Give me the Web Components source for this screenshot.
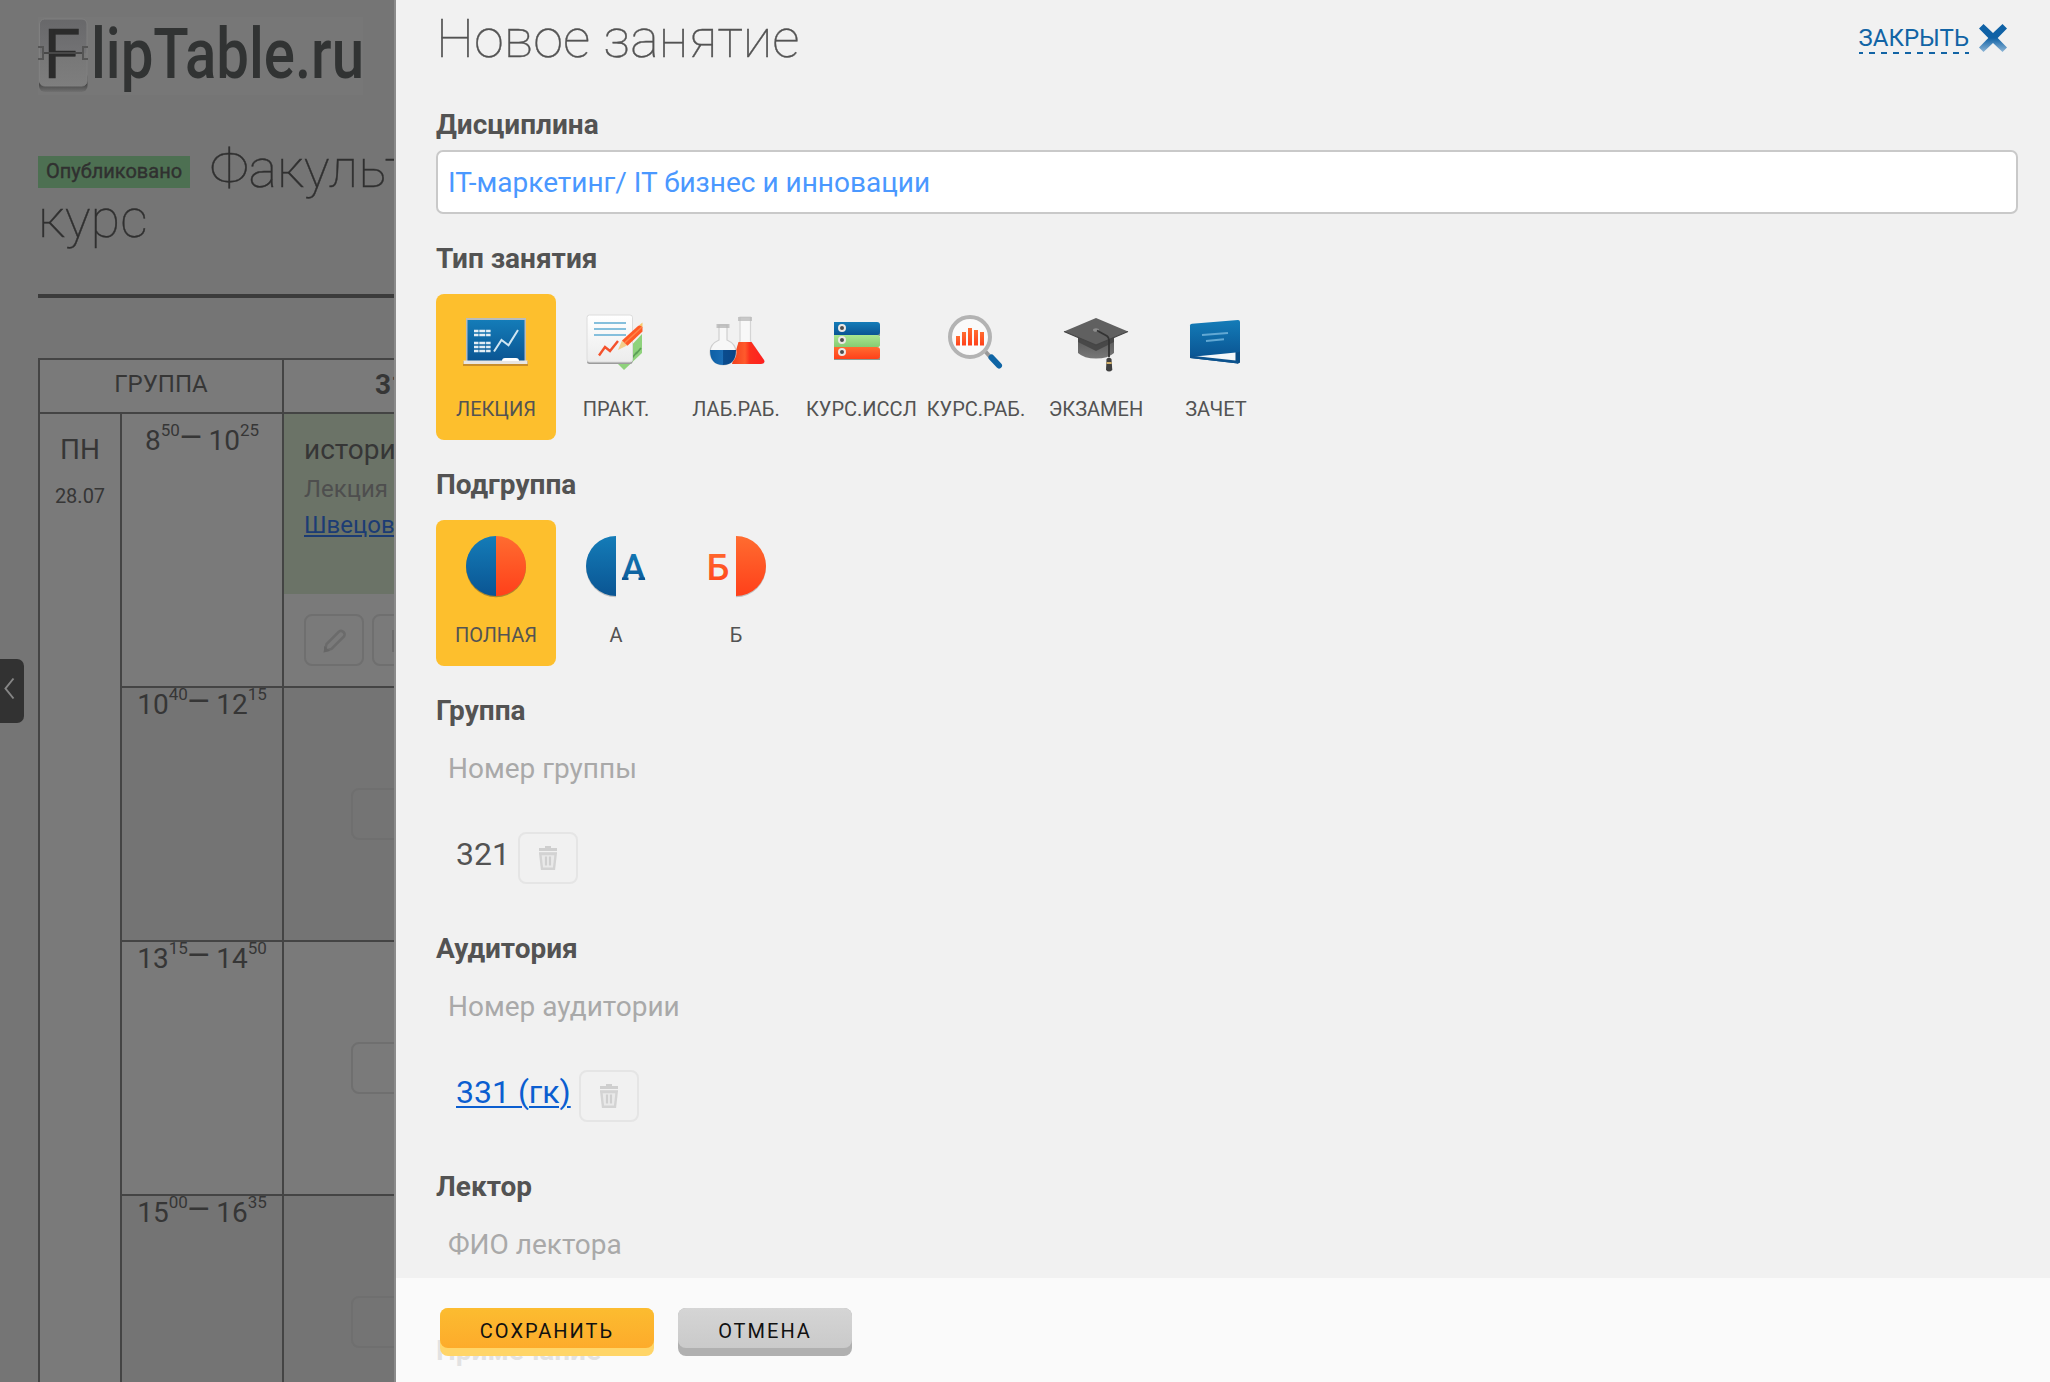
<!DOCTYPE html>
<html lang="ru">
<head>
<meta charset="utf-8">
<title>FlipTable.ru</title>
<style>
html,body{margin:0;height:1382px;overflow:hidden;background:#757575}
body{font-family:Roboto,"Liberation Sans",sans-serif;color:#535353}
</style>
</head>
<body>
<lesson-app></lesson-app>
<script>
const define=(name,html)=>customElements.define(name,class extends HTMLElement{
  connectedCallback(){
    if(this.shadowRoot)return;
    const root=this.attachShadow({mode:"open"});
    root.innerHTML=typeof html==="function"?html(this):html;
  }
});

const GRAD=`<defs>
<linearGradient id="b" x1="0" y1="0" x2="0" y2="1"><stop offset="0" stop-color="#147cb8"/><stop offset="1" stop-color="#0a5593"/></linearGradient>
<linearGradient id="r" x1="0" y1="0" x2="0" y2="1"><stop offset="0" stop-color="#ff6c30"/><stop offset="1" stop-color="#ff401a"/></linearGradient>
<linearGradient id="g" x1="0" y1="0" x2="0" y2="1"><stop offset="0" stop-color="#a9e690"/><stop offset="1" stop-color="#86cc72"/></linearGradient>
<linearGradient id="w" x1="0" y1="0" x2="0" y2="1"><stop offset="0" stop-color="#fff"/><stop offset="1" stop-color="#ececec"/></linearGradient>
<linearGradient id="k" x1="0" y1="0" x2="0" y2="1"><stop offset="0" stop-color="#575757"/><stop offset="1" stop-color="#777"/></linearGradient>
<linearGradient id="lq" x1="0" y1="0" x2="1" y2="0"><stop offset="0" stop-color="#f0401c"/><stop offset=".4" stop-color="#ff5a2c"/><stop offset=".55" stop-color="#fb2f1c"/><stop offset="1" stop-color="#ff1f1f"/></linearGradient>
<linearGradient id="sq" x1="0" y1="0" x2="1" y2="0"><stop offset="0" stop-color="#0d5fa5"/><stop offset=".5" stop-color="#1b6db4"/><stop offset=".52" stop-color="#0a4c8e"/><stop offset="1" stop-color="#0a4585"/></linearGradient>
</defs>`;
const ICONS={
lecture:`<rect x="27" y="67" width="65" height="5" fill="#c98e2a"/><rect x="30" y="24" width="60" height="43" fill="#b9bcbc"/><rect x="31.5" y="26" width="57" height="41" fill="url(#b)"/><rect x="27.500" y="66.500" width="64" height="3.500" fill="#e9e6e2"/><g stroke="#e4eef5" stroke-width="2.300" stroke-dasharray="4.500 .8 6 .8"><path d="M38 37h17M38 41h17M38 49h17M38 53h17M38 57h17"/></g><path d="M58 57.500 65.500 46l7 5.200L82 36" fill="none" stroke="#cfe6f2" stroke-width="2"/><path d="M66 67q0-3 3-3h11q3 0 3 3z" fill="#fff"/>`,
practice:`<path d="M86 40v19L68 76 60 68z" fill="#8fd27c"/><path d="m80 60 5-6M76 64l5-6M71 69l4-5" stroke="#5d9f57" stroke-width="1.800"/><rect x="31" y="22" width="45.500" height="48" rx="2.500" fill="#9c9c9c"/><rect x="31" y="21" width="45.500" height="47" rx="2.500" fill="url(#w)" stroke="#dcdcdc"/><path d="M38 29h32M38 35h32M38 41h32" stroke="#85bfdc" stroke-width="2"/><path d="M43 61.500 49 53l5 4 8-10" fill="none" stroke="#f4522c" stroke-width="2.400"/><path d="M62 56 66 46.500 71 51.500z" fill="#f2cf8b"/><path d="M66 46.500 82 32q3-2 4.500 1v4.500L71.500 51.800z" fill="#ff5a26"/><path d="M68.500 49 86 33" stroke="#ff8548" stroke-width="1.500"/><path d="m83.500 31 3-2.500V33z" fill="#f7c96a"/>`,
lab:`<path d="M64 23v24L57 68q0 1.500 2 1.500h27q2.500 0 2-2.500L74.500 47V23z" fill="#f8f8f8" stroke="#d4d4d4" stroke-width="1.200"/><path d="M62.500 48H75.500L88 66q1.500 3.500-3 4H56z" fill="url(#lq)"/><path d="M62 24h14M62 26h14" stroke="#b8b8b8" stroke-width="1.400"/><path d="M43 31v15q-9 4-9 12a13 13 0 0 0 26 0q0-8-9-12V31z" fill="#f7f7f7" stroke="#cfcfcf" stroke-width="1.200"/><path d="M34 56h26q0 15-13 15T34 56z" fill="url(#sq)"/><path d="M40.500 31h13M40.500 33h13" stroke="#b4b4b4" stroke-width="1.400"/>`,
binders:`<path d="M38 39h46v3H38zM38 63h46v3H38z" fill="#8b9b93"/><path d="M38 28h43q3 0 3 3v7q0 3-3 3H38z" fill="url(#b)"/><path d="M38 41h43q3 0 3 3v7q0 2-3 2H38z" fill="url(#g)"/><path d="M38 53h43q3 0 3 3v6q0 3-3 3H38z" fill="url(#r)"/><g fill="#4d4d4d" stroke="#ece8e4" stroke-width="2"><circle cx="46" cy="34" r="3"/><circle cx="46" cy="46" r="3"/><circle cx="46" cy="58" r="3"/></g>`,
search:`<path d="m69 57 7 8" stroke="#999" stroke-width="4"/><path d="m75.500 63.500 7.500 8" stroke="#0f65a5" stroke-width="6" stroke-linecap="round"/><circle cx="54" cy="43" r="20" fill="#fafafa" stroke="#b3b3b3" stroke-width="4"/><g fill="url(#r)"><path d="M40 42h4v9.500h-4z"/><path d="M46 38h4v13.500h-4z"/><path d="M52 34h4v17.500h-4z"/><path d="M58 36h4v15.500h-4z"/><path d="M64 38h4v13.500h-4z"/></g>`,
cap:`<path d="M42 42v17q6 5.500 18 5.500T78 59V42z" fill="url(#k)"/><path d="M42 43v5l18 9 18-9v-5L60 51z" fill="#484848"/><path d="M28 37.500 60 24 92 37.500 60 51z" fill="#606060"/><path d="M28 37.500 60 51 92 37.500" fill="none" stroke="#454545" stroke-width="1.200"/><ellipse cx="60" cy="36" rx="3" ry="1.800" fill="#8c8c8c"/><path d="M61 36.500 71 42q2 1.500 2 4v17" fill="none" stroke="#333" stroke-width="1.800"/><path d="M70.500 65q2.500-3 5 0l.8 11q-3.300 3-6.300 0z" fill="#404040"/><path d="M70.500 68h5.200v2h-5.200z" fill="#d2b06b"/>`,
book:`<path d="M35 62 82.500 68V57L84 57v11.500L82 69.500 34 64z" fill="#0a4d85"/><path d="M42 62 79 66V56z" fill="#f4f7fa"/><path d="M79.500 57H84v11l-2 1.500-2.500-1z" fill="#0a4d85"/><path d="M34 63V31.500Q34 30 36 29.800L82 26q2 0 2 2v28.500q0 1.500-1.500 1.700z" fill="url(#b)"/><path d="m34 61.500 6 0.800 42 4.500v2.700L34 64z" fill="#0c528d"/><path d="m46 41 26-2M50 47l18-1.700" stroke="#62a8d3" stroke-width="2"/>`,
full:`<circle cx="60" cy="47.300" r="30" fill="#6b5a2b" opacity=".55"/><path d="M60 16a30 30 0 0 0 0 60z" fill="url(#b)"/><path d="M60 16a30 30 0 0 1 0 60z" fill="url(#r)"/>`,
a:`<path d="M60 17.300a30 30 0 0 0 0 60z" fill="#000" opacity=".2"/><path d="M60 16a30 30 0 0 0 0 60z" fill="url(#b)"/><text x="77.500" y="60" text-anchor="middle" font-size="36" font-weight="500" fill="url(#b)">А</text><path d="M66 57.500h6.500v2.500H66zM82.500 57.500H89v2.500h-6.500z" fill="#0a5593"/>`,
b:`<path d="M60 17.300a30 30 0 0 1 0 60z" fill="#000" opacity=".2"/><path d="M60 16a30 30 0 0 1 0 60z" fill="url(#r)"/><text x="42" y="60" text-anchor="middle" font-size="36" font-weight="500" fill="url(#r)">Б</text>`
};

define("choice-tile",el=>`<style>
:host{display:flex;flex-direction:column;width:120px;height:146px;border-radius:8px;font-size:20px;line-height:24px;align-items:center;white-space:nowrap}
:host([selected]){background:#fdbf2d}
svg{display:block;width:120px;height:103px;flex:none}
span{width:100px;text-align:center}
</style><svg viewBox="0 0 120 103">${GRAD}${ICONS[el.getAttribute("icon")]}</svg><span><slot></slot></span>`);

define("form-section",el=>`<style>
:host{display:block;margin-bottom:27px}
h2{margin:0;height:34px;font-size:28px;line-height:36px;font-weight:700}
</style><h2>${el.getAttribute("label")}</h2><slot></slot>`);

define("text-field",`<style>
:host{display:block;box-sizing:border-box;height:64px;margin-top:9px;padding-left:10px;border:2px solid transparent;border-radius:7px;font-size:28px;line-height:62px;color:#a9a9a9;white-space:nowrap}
:host([filled]){background:#fff;border-color:#c9c9c9;color:#4a98ff}
</style><slot></slot>`);

define("tile-row",`<style>:host{display:flex;margin-top:19px}</style><slot></slot>`);

define("picked-item",`<style>
:host{display:flex;gap:8px;margin:32px 0 47px 20px;height:52px;font-size:32px;line-height:45px}
:host([link]) span{color:#0b5ed0;text-decoration:underline;text-decoration-thickness:2px;text-underline-offset:3px}
i{box-sizing:border-box;width:60px;height:52px;border:2px solid #e5e5e5;border-radius:8px}
svg{display:block;margin:-2px}
</style><span><slot></slot></span><i><svg width="60" height="52"><path d="M27 14h6v2h6v3H21v-3h6z" fill="#cfcfcf"/><path d="M21 20h18v2H21z" fill="#dadada"/><path d="m22.300 22 1.700 14.800h12L37.700 22z" fill="#e9e9e9" stroke="#d3d3d3" stroke-width="2.400"/><path d="M28 24.500v9M32 24.500v9" stroke="#cfcfcf" stroke-width="2.200"/></svg></i>`);

define("close-link",`<style>
:host{display:flex;align-items:flex-start;gap:10px;color:#1264a5;font-size:24px;line-height:30px}
div{height:31px;background:repeating-linear-gradient(90deg,#1264a5 0 6px,transparent 6px 12px) -2px 100%/calc(100% + 2px) 2px no-repeat}
svg{display:block;margin-top:1px}
</style><div><slot></slot></div><svg width="28" height="28"><defs><linearGradient id="x" x1="0" y1="0" x2="0" y2="1"><stop offset=".5" stop-color="#1062a6"/><stop offset="1" stop-color="#8fb6d6"/></linearGradient></defs><path d="M4.500 0 14 9 23.500 0 28 4.500 18.700 14 28 23.500 23.500 28 14 19 4.500 28 0 23.500 9.300 14 0 4.500z" fill="url(#x)"/></svg>`);

define("push-button",`<style>
:host{display:block;box-sizing:border-box;height:48px;border-radius:8px;background:#b0b0b0;color:#111;font-size:20px;letter-spacing:2px}
:host([primary]){background:#ffd568}
div{height:40px;border-radius:8px;background:linear-gradient(#d5d5d5,#cacaca);line-height:46px;text-align:center}
:host([primary]) div{background:linear-gradient(#fcbc30,#fdab2b)}
</style><div><slot></slot></div>`);

define("lesson-form",`<style>
:host{display:block;position:relative;box-sizing:border-box;height:1382px;overflow:hidden;background:#f1f1f1;border-left:2px solid #8b8b8b;padding:0 32px 0 40px}
header{display:flex;justify-content:space-between;height:107px}
h1{margin:7px 0 0;font-size:54px;line-height:64px;font-weight:100;-webkit-text-stroke:.4px}
close-link{margin:23px 11px 0 0}
footer{position:absolute;left:0;right:0;bottom:0;height:104px;box-sizing:border-box;background:rgba(251,251,251,.85);display:flex;gap:24px;padding:30px 0 0 44px}
.s{width:214px}.c{width:174px}
</style>
<header><h1>Новое занятие</h1><close-link>ЗАКРЫТЬ</close-link></header>
<form-section label="Дисциплина"><text-field filled>IT-маркетинг/ IT бизнес и инновации</text-field></form-section>
<form-section label="Тип занятия"><tile-row>
<choice-tile icon="lecture" selected>ЛЕКЦИЯ</choice-tile><choice-tile icon="practice">ПРАКТ.</choice-tile><choice-tile icon="lab">ЛАБ.РАБ.</choice-tile><choice-tile icon="binders">КУРС.ИССЛ</choice-tile><choice-tile icon="search">КУРС.РАБ.</choice-tile><choice-tile icon="cap">ЭКЗАМЕН</choice-tile><choice-tile icon="book">ЗАЧЕТ</choice-tile>
</tile-row></form-section>
<form-section label="Подгруппа"><tile-row>
<choice-tile icon="full" selected>ПОЛНАЯ</choice-tile><choice-tile icon="a">А</choice-tile><choice-tile icon="b">Б</choice-tile>
</tile-row></form-section>
<form-section label="Группа"><text-field>Номер группы</text-field><picked-item>321</picked-item></form-section>
<form-section label="Аудитория"><text-field>Номер аудитории</text-field><picked-item link>331 (гк)</picked-item></form-section>
<form-section label="Лектор"><text-field>ФИО лектора</text-field></form-section>
<form-section label="Примечание" style="margin-top:57px"></form-section>
<footer><push-button primary class="s">СОХРАНИТЬ</push-button><push-button class="c">ОТМЕНА</push-button></footer>`);

define("site-logo",`<style>:host{display:block;height:80px}svg{display:block}</style>
<svg width="330" height="80" font-family="Roboto,sans-serif"><defs><linearGradient id="t" x1="0" y1="0" x2="0" y2="1"><stop offset="0" stop-color="#68686a"/><stop offset=".5" stop-color="#727274"/><stop offset=".52" stop-color="#777"/><stop offset="1" stop-color="#7e7e7e"/></linearGradient><linearGradient id="sh" x1="0" y1="0" x2="0" y2="1"><stop offset=".6" stop-color="#454545"/><stop offset="1" stop-color="#707070"/></linearGradient></defs>
<rect x="0" y="0" width="325" height="78" fill="#777"/>
<rect x="1" y="54" width="48.500" height="21" rx="6" fill="url(#sh)"/><rect x="1.500" y="2" width="47.500" height="67" rx="5" fill="url(#t)" stroke="#808080"/>
<text x="5.500" y="61" font-size="69" fill="#2b2b2b" stroke="#2b2b2b" stroke-width=".5" textLength="37" lengthAdjust="spacingAndGlyphs">F</text>
<path d="M6 36h38" stroke="#484848" stroke-width="2"/><path d="M0 30h5v12H0M50 30h-5v12h5" fill="none" stroke="#555" stroke-width="2"/>
<text x="53" y="61" font-size="70" font-weight="500" fill="#313333" textLength="273" lengthAdjust="spacingAndGlyphs">lipTable.ru</text></svg>`);

define("time-slot",el=>{
  const [a,b,c,d]=el.getAttribute("t").split(" ");
  return `<style>
:host{display:block;font-size:28px;line-height:34px;text-align:center;white-space:nowrap}
sup{font-size:17px;line-height:0;vertical-align:14px}
b{font-weight:500;position:relative;top:-3px}
</style>${a}<sup>${b}</sup><b>—</b> ${c}<sup>${d}</sup>`});

define("tool-button",`<style>
:host{display:block;box-sizing:border-box;flex:none;width:60px;height:52px;border:2px solid var(--edge,#6f6f6f);border-radius:8px}
</style><slot></slot>`);

define("schedule-table",`<style>
:host{display:grid;box-sizing:border-box;width:520px;height:1030px;grid-template:52px 272px 252px 252px 252px/80px 160px 1fr;gap:2px;padding:2px 0 0 2px;background:#444;color:#363636;text-align:center}
:host>div{background:#7a7a7a;overflow:hidden}
.alt{background:#747474!important}
.h{grid-column:span 2;font-size:24px;line-height:48px}
.n{font-size:28px;font-weight:700;line-height:49px;text-align:left;padding-left:91px}
.day{grid-row:span 4;font-size:28px;line-height:34px;padding-top:19px}
.day small{display:block;font-size:20px;line-height:24px;padding-top:17px}
.l{text-align:left}
.g{height:180px;box-sizing:border-box;background:#6b7367;padding:18px 0 0 20px;font-size:28px;line-height:36px}
.g p{margin:0;font-size:24px;line-height:36px;color:#4e4e4e}
.g p:first-of-type{margin-top:3px}
.g a{color:#1c3c74;text-decoration:underline}
.tools{display:flex;gap:8px;padding:20px}
.e{padding:100px 0 0 67px}
</style>
<div class="h">ГРУППА</div><div class="n">311</div>
<div class="day">ПН<small>28.07</small></div>
<div style="padding-top:10px"><time-slot t="8 50 10 25"></time-slot></div>
<div class="l"><div class="g">история<p>Лекция</p><p><a>Швецов</a></p></div><div class="tools"><tool-button><svg width="56" height="48"><path d="M19 35l1.500-7L33 15.500q2.500-1.500 4.500 0.500t.5 4.500L25.500 33z" fill="none" stroke="#6b6b6b" stroke-width="2.500"/><path d="M18 36v-6l6 5z" fill="#666"/></svg></tool-button><tool-button><svg width="56" height="48"><path d="M19 15h18v20H19z" fill="none" stroke="#6b6b6b" stroke-width="2"/></svg></tool-button></div></div>
<div class="alt"><time-slot t="10 40 12 15"></time-slot></div><div class="alt e"><tool-button></tool-button></div>
<div><time-slot t="13 15 14 50"></time-slot></div><div class="e"><tool-button></tool-button></div>
<div class="alt"><time-slot t="15 00 16 35"></time-slot></div><div class="alt e"><tool-button></tool-button></div>`);

define("schedule-page",`<style>
:host{display:block;position:relative;box-sizing:border-box;height:1382px;overflow:hidden;background:#757575;color:#363636;padding:17px 0 0 38px}
h1{margin:47px 0 0;width:520px;height:154px;box-sizing:border-box;border-bottom:4px solid #3b3b3b;font-size:54px;line-height:50px;font-weight:100;color:#303030;-webkit-text-stroke:.4px}
mark{width:152px;height:32px;box-sizing:border-box;margin:12px 20px 0 0;background:#4d7052;color:#303030;font-size:20px;line-height:30px;font-weight:400;text-align:center}
.l{height:50px;white-space:nowrap;display:flex;align-items:flex-start}
schedule-table{margin-top:60px}
aside{position:absolute;left:0;top:659px;width:24px;height:64px;border-radius:0 7px 7px 0;background:#323232}
</style>
<site-logo></site-logo>
<h1><div class="l"><mark>Опубликовано</mark>Факультет</div><div class="l">курс</div></h1>
<schedule-table></schedule-table>
<aside><svg width="24" height="64"><path d="M13.500 19.500 5.500 29.500l8 10" fill="none" stroke="#858585" stroke-width="2"/></svg></aside>`);

define("lesson-app",`<style>:host{display:grid;grid-template-columns:394px 1fr;height:1382px}</style><schedule-page></schedule-page><lesson-form></lesson-form>`);
</script>
</body>
</html>
